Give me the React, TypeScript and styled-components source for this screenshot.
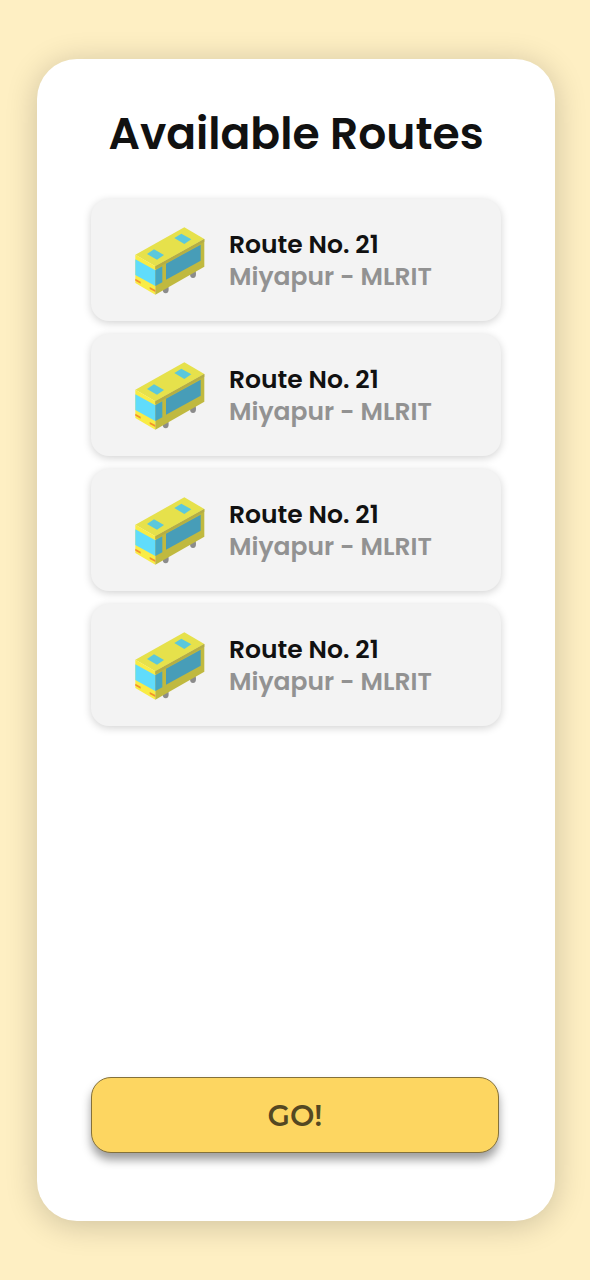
import React from "react";
import styled, { createGlobalStyle } from "styled-components";

const GlobalStyle = createGlobalStyle`
  *, *::before, *::after { box-sizing: border-box; }
  body {
    margin: 0;
    background: #feefc3;
    font-family: Poppins, Inter, sans-serif;
    color: #111111;
  }
`;

const Page = styled.div`
  display: flex;
  min-height: 100vh;
  padding: 59px 35px 59px 37px;
`;

const Panel = styled.main`
  flex: 1;
  min-width: 0;
  display: flex;
  flex-direction: column;
  padding: 49px 54px 68px;
  border-radius: 40px;
  background: #ffffff;
  box-shadow: 0 4px 32px rgba(0, 0, 0, 0.2);
`;

const Title = styled.h1`
  margin: 0 0 39px;
  font-size: 44px;
  line-height: 52px;
  font-weight: 600;
  text-align: center;
  white-space: nowrap;
`;

const RouteList = styled.ul`
  display: flex;
  flex-direction: column;
  gap: 13px;
  margin: 0;
  padding: 0;
  list-style: none;
`;

const RouteCard = styled.li`
  display: flex;
  align-items: center;
  gap: 24px;
  min-height: 122px;
  padding: 2px 44px 0;
  border-radius: 18px;
  background: #f3f3f3;
  box-shadow: 0 2px 8px rgba(0, 0, 0, 0.18);
`;

const RouteText = styled.div`
  font-size: 25px;
  line-height: 32px;
  font-weight: 600;
  white-space: nowrap;
`;

const RouteName = styled.div``;

const RouteStops = styled.div`
  color: #929292;
`;

const GoButton = styled.button`
  height: 76px;
  margin: auto 2px 0 0;
  border: 1px solid #84713a;
  border-radius: 20px;
  background: #fdd661;
  box-shadow: 0 7px 10px rgba(0, 0, 0, 0.38);
  color: #544822;
  font-family: Montserrat, Inter, sans-serif;
  font-size: 29px;
  font-weight: 600;
  cursor: pointer;
`;

const BusSvg = styled.svg`
  flex: none;
  width: 70px;
  height: 68px;
`;

function BusIcon() {
  return (
    <BusSvg viewBox="33 37 208 204" aria-hidden="true">
      <ellipse cx="124" cy="223" rx="9" ry="13" fill="#8b8b8b" />
      <ellipse cx="206" cy="177" rx="9" ry="13" fill="#8b8b8b" />
      <path d="M33 120L180 38L240 73L93 155Z" fill="#e6e14b" />
      <path d="M33 120L93 155V240L33 205Z" fill="#f9ec45" />
      <path d="M93 155L240 73V156L93 240Z" fill="#c0b93f" />
      <path d="M93 155L240 73V81L93 164Z" fill="#b5ae45" />
      <path d="M33 134L93 167V214L33 181Z" fill="#60dcfb" />
      <path d="M93 167L114 155V203L93 214Z" fill="#46a6c3" />
      <path d="M125 147L229 90V138L125 195Z" fill="#479db8" />
      <path d="M68 118L89 104L119 121L98 135Z" fill="#5bc8dc" />
      <path d="M150 70L171 57L201 74L180 88Z" fill="#5bc8dc" />
      <path d="M33 192L49 201V207L33 198Z" fill="#f3912d" />
      <path d="M76 217L93 226V232L76 223Z" fill="#f3912d" />
    </BusSvg>
  );
}

const routes = [1, 2, 3, 4].map((id) => ({
  id,
  name: "Route No. 21",
  stops: "Miyapur - MLRIT",
}));

export default function App() {
  return (
    <>
      <GlobalStyle />
      <Page>
        <Panel>
          <Title>Available Routes</Title>
          <RouteList>
            {routes.map((route) => (
              <RouteCard key={route.id}>
                <BusIcon />
                <RouteText>
                  <RouteName>{route.name}</RouteName>
                  <RouteStops>{route.stops}</RouteStops>
                </RouteText>
              </RouteCard>
            ))}
          </RouteList>
          <GoButton type="button">GO!</GoButton>
        </Panel>
      </Page>
    </>
  );
}
